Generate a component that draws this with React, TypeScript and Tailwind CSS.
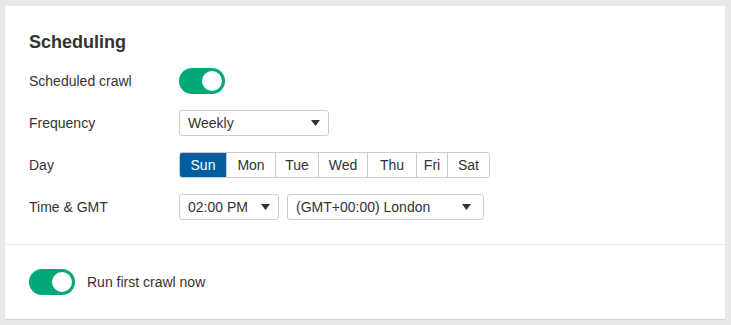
import React from "react";

function Toggle() {
  return (
    <div className="relative h-[26px] w-[46px] rounded-full bg-[#00a878]">
      <div className="absolute right-[3px] top-[3px] h-[20px] w-[20px] rounded-full bg-white" />
    </div>
  );
}

function Caret() {
  return (
    <svg width="9" height="6" viewBox="0 0 9 6" className="shrink-0">
      <path d="M0 0 L9 0 L4.5 6 Z" fill="#333" />
    </svg>
  );
}

function Select({ label, width, padR }: { label: string; width: string; padR: string }) {
  return (
    <div
      className={`flex h-[26px] items-center justify-between rounded-[3px] border border-[#cccccc] bg-white pl-[8px] ${width} ${padR}`}
    >
      <span className="text-[14px] text-[#333]">{label}</span>
      <Caret />
    </div>
  );
}

const days = ["Sun", "Mon", "Tue", "Wed", "Thu", "Fri", "Sat"];
const widths = ["w-[46px]", "w-[49px]", "w-[43px]", "w-[49px]", "w-[49px]", "w-[31px]", "w-[42px]"];

export default function App() {
  return (
    <div
      className="h-[325px] w-[731px] bg-[#e9e9eb] pl-[5px] pt-[6px]"
      style={{ fontFamily: '"Liberation Sans", Arial, sans-serif' }}
    >
      <div className="w-[720px] bg-white shadow-[0_1px_1px_rgba(0,0,0,0.08)]">
        <div className="flex flex-col px-[24px] pb-[24px] pt-[24px]">
          <h2 className="h-[24px] text-[18px] font-bold leading-[24px] text-[#333]">Scheduling</h2>
          <div className="mt-[14px] flex flex-col gap-[16px] text-[14px] text-[#333]">
            <div className="flex h-[26px] items-center">
              <div className="w-[150px]">Scheduled crawl</div>
              <Toggle />
            </div>
            <div className="flex h-[26px] items-center">
              <div className="w-[150px]">Frequency</div>
              <Select label="Weekly" width="w-[150px]" padR="pr-[8px]" />
            </div>
            <div className="flex h-[26px] items-center">
              <div className="w-[150px]">Day</div>
              <div className="flex h-[26px] overflow-hidden rounded-[3px] border border-[#cccccc]">
                {days.map((d, i) => (
                  <div
                    key={d}
                    className={`flex items-center justify-center ${widths[i]} ${
                      i === 0 ? "bg-[#005e9f] text-white" : "border-l border-[#cccccc] bg-white text-[#333]"
                    }`}
                  >
                    {d}
                  </div>
                ))}
              </div>
            </div>
            <div className="flex h-[26px] items-center">
              <div className="w-[150px]">Time &amp; GMT</div>
              <Select label="02:00 PM" width="w-[100px]" padR="pr-[8px]" />
              <div className="w-[8px]" />
              <Select label="(GMT+00:00) London" width="w-[197px]" padR="pr-[12px]" />
            </div>
          </div>
        </div>
        <div className="h-px bg-[#ececec]" />
        <div className="flex items-center gap-[12px] px-[24px] py-[24px]">
          <Toggle />
          <span className="text-[14px] text-[#333]">Run first crawl now</span>
        </div>
      </div>
    </div>
  );
}
